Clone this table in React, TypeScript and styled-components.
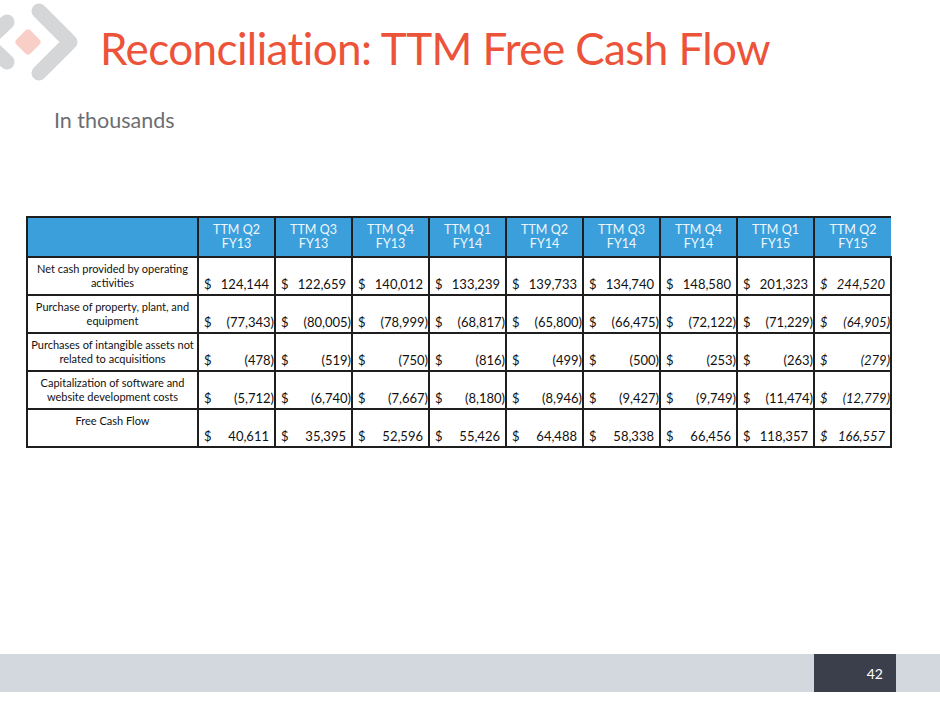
import React from "react";
import styled, { createGlobalStyle } from "styled-components";

const Global = createGlobalStyle`
  html, body { margin: 0; padding: 0; background: #ffffff; }
  body { font-family: Lato, "Noto Sans", sans-serif; }
`;

const Page = styled.div`
  width: 940px;
  height: 705px;
  display: flex;
  flex-direction: column;
  background: #ffffff;
  overflow: hidden;
`;

const Header = styled.header`
  display: flex;
  align-items: flex-start;
  height: 90px;
`;

const LogoBox = styled.div`
  width: 100px;
  height: 90px;
  flex: none;
`;

const Title = styled.h1`
  margin: 26px 0 0 0;
  font-family: Lato, "Noto Sans", sans-serif;
  font-weight: 400;
  font-size: 44px;
  line-height: 44px;
  letter-spacing: -0.6px;
  color: #ec5339;
  white-space: nowrap;
`;

const Subtitle = styled.div`
  margin: 18px 0 0 54px;
  font-size: 21.5px;
  line-height: 24px;
  color: #6b6e72;
`;

const TableWrap = styled.div`
  margin: 84px 0 0 26px;
`;

const Grid = styled.table`
  border-collapse: collapse;
  table-layout: fixed;
  width: 866px;
  font-family: Lato, "Noto Sans", sans-serif;
  color: #111111;
`;

const HeadCell = styled.th`
  box-sizing: border-box;
  background: #3a9fdb;
  color: #eef7fd;
  font-weight: 400;
  font-size: 12.5px;
  line-height: 13.5px;
  height: 40px;
  padding: 0 0 1px 0;
  text-align: center;
  vertical-align: middle;
  border-top: 2px solid #1e1e1e;
  border-bottom: 2px solid #1e1e1e;
  border-left: 2px solid #1e1e1e;
  &:last-child { border-right: none; }
`;

const LabelCell = styled.td`
  box-sizing: border-box;
  height: 38px;
  padding: 4px 2px 0 2px;
  vertical-align: top;
  text-align: center;
  font-size: 11px;
  line-height: 13.5px;
  border: 2px solid #1e1e1e;
`;

const ValueCell = styled.td<{ $italic?: boolean }>`
  box-sizing: border-box;
  height: 38px;
  padding: 0 0 2px 5px;
  vertical-align: bottom;
  font-size: 13px;
  line-height: 15px;
  font-style: ${(p) => (p.$italic ? "italic" : "normal")};
  border: 2px solid #1e1e1e;
`;

const ValueLine = styled.div`
  display: flex;
  justify-content: space-between;
  align-items: flex-end;
  white-space: nowrap;
`;

const Amount = styled.span<{ $neg: boolean }>`
  padding-right: ${(p) => (p.$neg ? "0px" : "5px")};
`;

const Footer = styled.footer`
  margin-top: auto;
  margin-bottom: 13px;
  height: 38px;
  background: #d3d7de;
  display: flex;
  justify-content: flex-end;
`;

const PageNum = styled.div`
  width: 82px;
  margin-right: 44px;
  background: #3a3f4b;
  color: #ffffff;
  font-size: 14px;
  display: flex;
  align-items: center;
  justify-content: flex-end;
  padding-right: 13px;
  box-sizing: border-box;
`;

const Logo = () => (
  <svg width="100" height="90" viewBox="0 0 100 90">
    <polyline
      points="7,22 -14,42 7,62"
      fill="none"
      stroke="#d5d6d8"
      strokeWidth="15"
      strokeLinejoin="round"
      strokeLinecap="round"
    />
    <polyline
      points="39,11 70,42 39,73"
      fill="none"
      stroke="#d5d6d8"
      strokeWidth="15"
      strokeLinejoin="round"
      strokeLinecap="round"
    />
    <rect
      x="18"
      y="32"
      width="20"
      height="20"
      rx="4"
      fill="#f9cec7"
      transform="rotate(45 28 42)"
    />
  </svg>
);

const columns = [
  ["TTM Q2", "FY13"],
  ["TTM Q3", "FY13"],
  ["TTM Q4", "FY13"],
  ["TTM Q1", "FY14"],
  ["TTM Q2", "FY14"],
  ["TTM Q3", "FY14"],
  ["TTM Q4", "FY14"],
  ["TTM Q1", "FY15"],
  ["TTM Q2", "FY15"],
];

const rows: { label: string[]; values: string[] }[] = [
  {
    label: ["Net cash provided by operating", "activities"],
    values: ["124,144", "122,659", "140,012", "133,239", "139,733", "134,740", "148,580", "201,323", "244,520"],
  },
  {
    label: ["Purchase of property, plant, and", "equipment"],
    values: ["(77,343)", "(80,005)", "(78,999)", "(68,817)", "(65,800)", "(66,475)", "(72,122)", "(71,229)", "(64,905)"],
  },
  {
    label: ["Purchases of intangible assets not", "related to acquisitions"],
    values: ["(478)", "(519)", "(750)", "(816)", "(499)", "(500)", "(253)", "(263)", "(279)"],
  },
  {
    label: ["Capitalization of software and", "website development costs"],
    values: ["(5,712)", "(6,740)", "(7,667)", "(8,180)", "(8,946)", "(9,427)", "(9,749)", "(11,474)", "(12,779)"],
  },
  {
    label: ["Free Cash Flow"],
    values: ["40,611", "35,395", "52,596", "55,426", "64,488", "58,338", "66,456", "118,357", "166,557"],
  },
];

export default function App() {
  return (
    <Page>
      <Global />
      <Header>
        <LogoBox>
          <Logo />
        </LogoBox>
        <Title>Reconciliation: TTM Free Cash Flow</Title>
      </Header>
      <Subtitle>In thousands</Subtitle>
      <TableWrap>
        <Grid>
          <colgroup>
            <col style={{ width: 171 }} />
            {columns.map((_, i) => (
              <col key={i} style={{ width: 77 }} />
            ))}
          </colgroup>
          <thead>
            <tr>
              <HeadCell />
              {columns.map((c, i) => (
                <HeadCell key={i}>
                  {c[0]}
                  <br />
                  {c[1]}
                </HeadCell>
              ))}
            </tr>
          </thead>
          <tbody>
            {rows.map((r, ri) => (
              <tr key={ri}>
                <LabelCell>
                  {r.label.map((l, li) => (
                    <React.Fragment key={li}>
                      {li > 0 && <br />}
                      {l}
                    </React.Fragment>
                  ))}
                </LabelCell>
                {r.values.map((v, vi) => (
                  <ValueCell key={vi} $italic={vi === 8}>
                    <ValueLine>
                      <span>$</span>
                      <Amount $neg={v.startsWith("(")}>{v}</Amount>
                    </ValueLine>
                  </ValueCell>
                ))}
              </tr>
            ))}
          </tbody>
        </Grid>
      </TableWrap>
      <Footer>
        <PageNum>42</PageNum>
      </Footer>
    </Page>
  );
}
